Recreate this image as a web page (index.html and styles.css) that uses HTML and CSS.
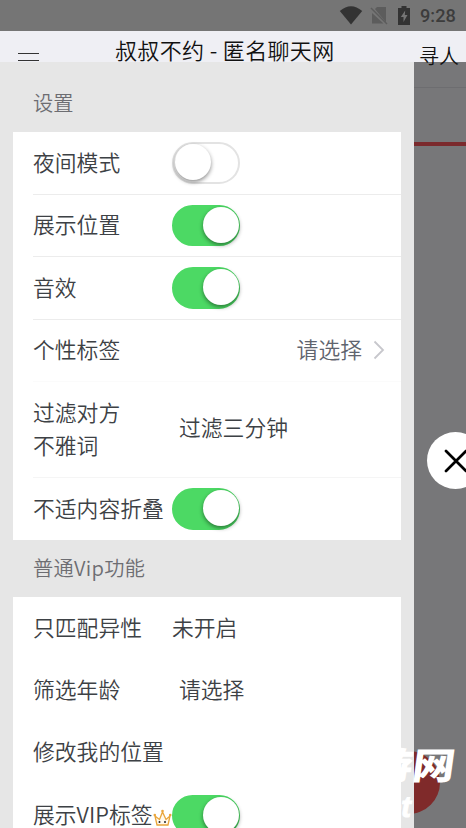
FILE: index.html
```html
<!DOCTYPE html>
<html lang="zh-CN">
<head>
<meta charset="utf-8">
<title>叔叔不约 - 匿名聊天网</title>
<link rel="stylesheet" href="styles.css">
</head>
<body>
<div class="screen">
  <div class="status">
    <svg class="wifi" width="24" height="19" viewBox="0 0 24 19"><path d="M.8 5Q12-4.500 23.200 5L12 18.500Z" fill="#333"/></svg>
    <svg class="sim" width="18" height="19" viewBox="0 0 18 19"><path d="M2 7v10.500h11.500zM5 3l2-2h9v15.500z" fill="#5c5c5c"/><path d="M1 2l16 16" stroke="#5c5c5c" stroke-width="1.500"/></svg>
    <svg class="battery" width="12" height="19" viewBox="0 0 12 19"><path d="M0 2h3.500V0h5v2H12v17H0z" fill="#333"/><path d="M7.200 4.500L2.800 11h2.700v5l4-7H6.800z" fill="#757575"/></svg>
    <span class="clock">9:28</span>
  </div>
  <header class="bar">
    <div class="menu"></div>
    <h1 class="title">叔叔不约 - 匿名聊天网</h1>
    <span class="action">寻人</span>
  </header>
  <div class="body">
    <main class="panel">
      <h2 class="heading">设置</h2>
      <section class="card">
        <div class="row line"><span class="label">夜间模式</span><i class="switch"></i></div>
        <div class="row line"><span class="label">展示位置</span><i class="switch on"></i></div>
        <div class="row line"><span class="label">音效</span><i class="switch on"></i></div>
        <div class="row line faint"><span class="label">个性标签</span><span class="pick">请选择</span><svg class="chev" width="12" height="20" viewBox="0 0 12 20"><path d="M1.500 1.500L10 10l-8.500 8.500" fill="none" stroke="#c7c7cc" stroke-width="1.800"/></svg></div>
        <div class="row tall line"><span class="label">过滤对方<br>不雅词</span><span class="value inset">过滤三分钟</span></div>
        <div class="row"><span class="label">不适内容折叠</span><i class="switch on"></i></div>
      </section>
      <h2 class="heading second">普通Vip功能</h2>
      <section class="card">
        <div class="row"><span class="label">只匹配异性</span><span class="value">未开启</span></div>
        <div class="row"><span class="label">筛选年龄</span><span class="value inset">请选择</span></div>
        <div class="row"><span class="label">修改我的位置</span></div>
        <div class="row"><span class="label">展示VIP标签<svg class="crown" width="19" height="18" viewBox="0 0 19 18"><path d="M4 16L2 7l4.500 3.500L9.500 3l3.500 7.500L17 7l-2 9z" fill="#fff9ed" stroke="#e9a53a" stroke-width="1.300"/><g fill="#e9a53a"><circle cx="1.800" cy="6" r="1.300"/><circle cx="9.500" cy="2" r="1.300"/><circle cx="17.200" cy="6" r="1.300"/></g><path d="M6.500 12v2M12 12v2" stroke="#333" stroke-width="1.600"/></svg></span><i class="switch on"></i></div>
      </section>
    </main>
    <aside class="shade"><div class="rule"></div><div class="redline"></div></aside>
  </div>
  <div class="disc"></div>
  <div class="mark mark-name">游网</div>
  <div class="mark mark-net">.net</div>
  <div class="close"><svg width="24" height="24" viewBox="0 0 24 24"><path d="M2 2l20 20M22 2L2 22" stroke="#000" stroke-width="2.700" stroke-linecap="round"/></svg></div>
</div>
</body>
</html>
```
FILE: styles.css
```css
* { box-sizing: border-box; }
body { margin: 0; font-family: "Noto Sans CJK SC", sans-serif; font-weight: 350; font-size: 21.8px; color: #3d4145; }
.screen { position: relative; width: 466px; height: 828px; overflow: hidden; display: flex; flex-direction: column; }
.status { flex: none; height: 31px; background: #757575; display: flex; align-items: flex-start; padding: 6px 11px 0 0; justify-content: flex-end; }
.wifi { margin-right: 7px; }
.sim { margin-right: 10px; }
.battery { margin-right: 10px; }
.clock { font: 500 18.2px/20px Roboto, sans-serif; color: #3c3c3c; width: 35px; white-space: nowrap; }
.bar { position: relative; z-index: 1; flex: none; height: 31px; background: #efeff4; display: flex; }
.menu { width: 21px; height: 8px; margin: 22px 76px 0 18px; border: solid #333; border-width: 1px 0; }
.title { margin: 2px 0 0; font-size: 22px; font-weight: 350; line-height: 32px; height: 29px; white-space: nowrap; color: #111; width: 304px; letter-spacing: .35px; }
.action { flex: none; font-size: 20px; line-height: 30px; margin-top: 10px; color: #111; white-space: nowrap; }
.body { flex: 1; min-height: 0; display: flex; }
.panel { flex: none; width: 414px; padding: 0 13px; background: #e6e6e6; overflow: hidden; }
.heading { margin: 0; padding: 12px 20px 0; height: 70.400px; font-size: 20.200px; line-height: 58px; font-weight: 350; color: #6d6d72; }
.heading.second { height: 57px; padding-top: 0; line-height: 56px; letter-spacing: .3px; }
.card { background: #fff; padding-left: 20px; }
.row { display: flex; align-items: center; height: 62.4px; }
.row.tall { height: 96px; line-height: 33px; }
.line { border-bottom: 1px solid #ececec; }
.line.faint { border-color: #fbfbfb; }
.line.tall { border-color: #f5f5f5; }
.label { flex: none; width: 139px; white-space: nowrap; }
.label, .value, .pick { padding-bottom: 3px; }
.second + .card .label, .second + .card .value, .tall .value { padding-bottom: 5px; }
.value.inset { padding-left: 7px; }
.pick { margin-left: auto; color: #5f646e; }
.chev { margin: 0 16px 0 11px; }
.switch { flex: none; width: 68px; height: 41.500px; border-radius: 21px; background: #fff; border: 2.500px solid #e3e3e3; }
.switch::after { content: ""; display: block; width: 36px; height: 36px; margin-left: 1px; border-radius: 50%; background: #fff; box-shadow: 0 2px 4px rgba(0,0,0,.45); }
.switch.on { background: #4cd964; border-color: #4cd964; }
.switch.on::after { margin-left: 29px; }
.crown { vertical-align: -4px; margin-left: 1px; }
.shade { flex: 1; background: #777779; }
.rule { height: 26px; border-bottom: 1px solid #6d6d70; }
.redline { height: 4px; margin-top: 54px; background: #7b2a2d; }
.disc { position: absolute; left: 377px; top: 751px; width: 63px; height: 63px; border-radius: 50%; background: #7f2a2a; clip-path: inset(0 0 0 37px); }
.mark { position: absolute; color: #fff; white-space: nowrap; }
.mark-name { left: 374px; top: 744px; font-size: 39px; line-height: 39px; font-weight: 900; transform: skewX(-8deg) scale(1.090, .940); }
.mark-net { left: 350px; top: 790px; width: 61px; text-align: right; font: italic 700 29px/34px "Liberation Sans", sans-serif; -webkit-text-stroke: 1px #fff; }
.close { position: absolute; left: 427px; top: 432px; width: 57px; height: 57px; border-radius: 50%; background: #fff; padding: 17px 0 0 17px; }
.close svg { display: block; }
```
